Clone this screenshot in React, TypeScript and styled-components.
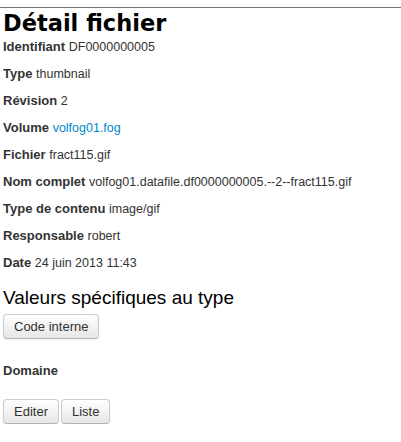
import React from "react";
import styled, { createGlobalStyle } from "styled-components";

const GlobalStyle = createGlobalStyle`
  html, body {
    margin: 0;
    padding: 0;
    background: #ffffff;
  }
  body {
    font-family: "Liberation Sans", Arial, sans-serif;
    font-size: 13px;
    color: #333333;
  }
`;

const Page = styled.div`
  padding: 0 3px;
`;

const Rule = styled.hr`
  margin: 7px -3px 0;
  border: 0;
  border-top: 1px solid #777777;
`;

const Title = styled.h1`
  margin: 0;
  font-family: "DejaVu Sans", sans-serif;
  font-weight: bold;
  font-size: 22.5px;
  line-height: 30px;
  color: #000000;
`;

const Fields = styled.dl`
  margin: 0;
`;

const Field = styled.div`
  line-height: 18px;
  margin-bottom: 9px;
`;

const Label = styled.dt`
  display: inline;
  font-weight: bold;
  font-size: 13px;
`;

const Value = styled.dd`
  display: inline;
  margin: 0;
  font-size: 12.5px;
`;

const Link = styled.a`
  color: #0088cc;
  text-decoration: none;
`;

const Subtitle = styled.h2`
  margin: 14px 0 4px;
  font-weight: normal;
  font-size: 19px;
  line-height: 24px;
  color: #000000;
`;

const Button = styled.button`
  display: inline-block;
  padding: 3px 10px;
  font-family: "Liberation Sans", Arial, sans-serif;
  font-size: 13px;
  line-height: 17px;
  color: #333333;
  background: linear-gradient(to bottom, #ffffff, #e6e6e6);
  border: 1px solid #cccccc;
  border-bottom-color: #b3b3b3;
  border-radius: 4px;
  box-shadow: inset 0 1px 0 rgba(255, 255, 255, 0.2), 0 1px 2px rgba(0, 0, 0, 0.05);
  cursor: pointer;
`;

const SectionLabel = styled.div`
  margin: 23px 0 19px;
  font-weight: bold;
  font-size: 13px;
  line-height: 18px;
`;

const Actions = styled.div`
  display: flex;
  gap: 2px;
`;

const fields: { label: string; value: string; href?: string }[] = [
  { label: "Identifiant", value: "DF0000000005" },
  { label: "Type", value: "thumbnail" },
  { label: "Révision", value: "2" },
  { label: "Volume", value: "volfog01.fog", href: "#" },
  { label: "Fichier", value: "fract115.gif" },
  { label: "Nom complet", value: "volfog01.datafile.df0000000005.--2--fract115.gif" },
  { label: "Type de contenu", value: "image/gif" },
  { label: "Responsable", value: "robert" },
  { label: "Date", value: "24 juin 2013 11:43" },
];

export default function App() {
  return (
    <>
      <GlobalStyle />
      <Page>
        <Rule />
        <Title>Détail fichier</Title>
        <Fields>
          {fields.map((f) => (
            <Field key={f.label}>
              <Label>{f.label}</Label>{" "}
              <Value>{f.href ? <Link href={f.href}>{f.value}</Link> : f.value}</Value>
            </Field>
          ))}
        </Fields>
        <Subtitle>Valeurs spécifiques au type</Subtitle>
        <Button>Code interne</Button>
        <SectionLabel>Domaine</SectionLabel>
        <Actions>
          <Button>Editer</Button>
          <Button>Liste</Button>
        </Actions>
      </Page>
    </>
  );
}
